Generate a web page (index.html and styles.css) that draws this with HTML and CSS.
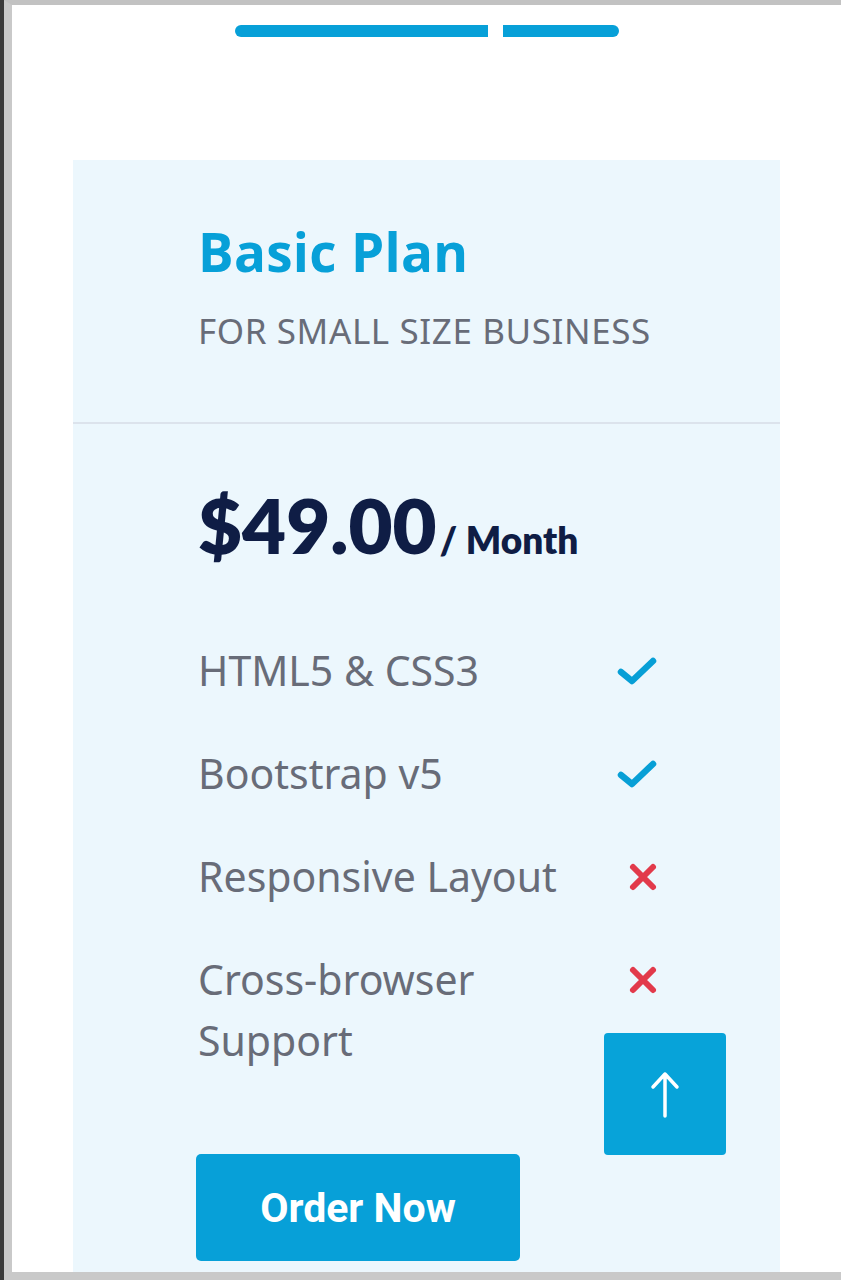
FILE: index.html
```html
<!DOCTYPE html>
<html lang="en">
<head>
  <meta charset="UTF-8">
  <meta name="viewport" content="width=device-width, initial-scale=1.0">
  <title>Pricing - Basic Plan</title>
  <link rel="stylesheet" href="styles.css">
</head>
<body>
  <div class="screen">
    <div class="title-bars">
      <span class="bar bar-long"></span>
      <span class="bar bar-short"></span>
    </div>

    <div class="plan-card">
      <div class="plan-head">
        <h2 class="plan-name">Basic Plan</h2>
        <p class="plan-tag">FOR SMALL SIZE BUSINESS</p>
      </div>

      <div class="plan-body">
        <div class="plan-price"><span class="amount">$49.00</span><span class="period">/ Month</span></div>

        <ul class="features">
          <li><span class="feature-name">HTML5 &amp; CSS3</span><span class="mark yes"><svg viewBox="0 0 40 30" width="40" height="30"><path d="M4 16 L15 25 L36 5" /></svg></span></li>
          <li><span class="feature-name">Bootstrap v5</span><span class="mark yes"><svg viewBox="0 0 40 30" width="40" height="30"><path d="M4 16 L15 25 L36 5" /></svg></span></li>
          <li><span class="feature-name">Responsive Layout</span><span class="mark no"><svg viewBox="0 0 30 30" width="30" height="30"><path d="M5 5 L25 25 M25 5 L5 25" /></svg></span></li>
          <li><span class="feature-name">Cross-browser Support</span><span class="mark no"><svg viewBox="0 0 30 30" width="30" height="30"><path d="M5 5 L25 25 M25 5 L5 25" /></svg></span></li>
        </ul>

        <button class="order-btn">Order Now</button>
      </div>
    </div>

    <a class="back-top" href="#"><svg viewBox="0 0 40 60" width="40" height="60"><path d="M20 52 V10 M8 23 L20 10 L32 23" /></svg></a>
  </div>
</body>
</html>
```

FILE: styles.css
```css
html, body { margin: 0; padding: 0; }
body { height: 1280px; overflow: hidden; background: #3a3a3a; font-family: "Open Sans", "Noto Sans", sans-serif; }
.screen { position: relative; margin-left: 4px; height: 1280px; box-sizing: border-box; border-left: 8px solid #c9c9c9; border-top: 5px solid #c2c2c2; border-bottom: 8px solid #c9c9c9; background: #fff; overflow: hidden; }

.title-bars { display: flex; justify-content: center; gap: 15px; margin-top: 20px; }
.bar { display: block; height: 12px; background: #07a0d8; }
.bar-long { width: 253px; border-radius: 6px 0 0 6px; }
.bar-short { width: 116px; border-radius: 0 6px 6px 0; }

.plan-card { margin: 123px 61px 0; background: #ecf7fd; }
.plan-head { padding: 62px 0 71px 125px; border-bottom: 2px solid #dce3ec; }
.plan-name { margin: 0; font-family: "Open Sans", sans-serif; font-weight: 700; font-size: 53px; line-height: 60px; color: #07a0d8; letter-spacing: 0.3px; }
.plan-tag { margin: 29px 0 0; font-family: "Noto Sans", sans-serif; font-size: 35px; line-height: 40px; color: #686c78; letter-spacing: 0.6px; }

.plan-body { padding: 56px 0 60px 125px; }
.plan-price { color: #0f1d45; font-family: "Lato", sans-serif; font-weight: 800; font-size: 76px; line-height: 90px; }
.period { font-size: 37px; line-height: 1; margin-left: 3px; }

.features { list-style: none; margin: 70px 0 0; padding: 0; width: 464px; display: flex; flex-direction: column; gap: 42px; }
.features li { display: flex; justify-content: space-between; align-items: flex-start; }
.feature-name { width: 390px; font-family: "Noto Sans", sans-serif; font-size: 41px; line-height: 61px; color: #686c78; }
.mark { width: 50px; height: 61px; display: flex; align-items: center; justify-content: center; }
.mark svg { fill: none; stroke-linecap: round; stroke-linejoin: round; }
.mark.yes svg { stroke: #079fd6; stroke-width: 6.5; }
.mark.no svg { stroke: #e23a4b; stroke-width: 6; margin-left: 12px; }

.order-btn { margin: 83px 0 0 -2px; width: 324px; height: 107px; border: none; border-radius: 5px; background: #07a0d8; color: #fff; font-family: "Roboto", sans-serif; font-weight: 700; font-size: 41px; cursor: pointer; }

.back-top { position: absolute; left: 592px; top: 1028px; width: 122px; height: 122px; border-radius: 4px; background: #07a3d9; display: flex; align-items: center; justify-content: center; }
.back-top svg { fill: none; stroke: #fff; stroke-width: 3.5; stroke-linecap: round; stroke-linejoin: round; }
```
